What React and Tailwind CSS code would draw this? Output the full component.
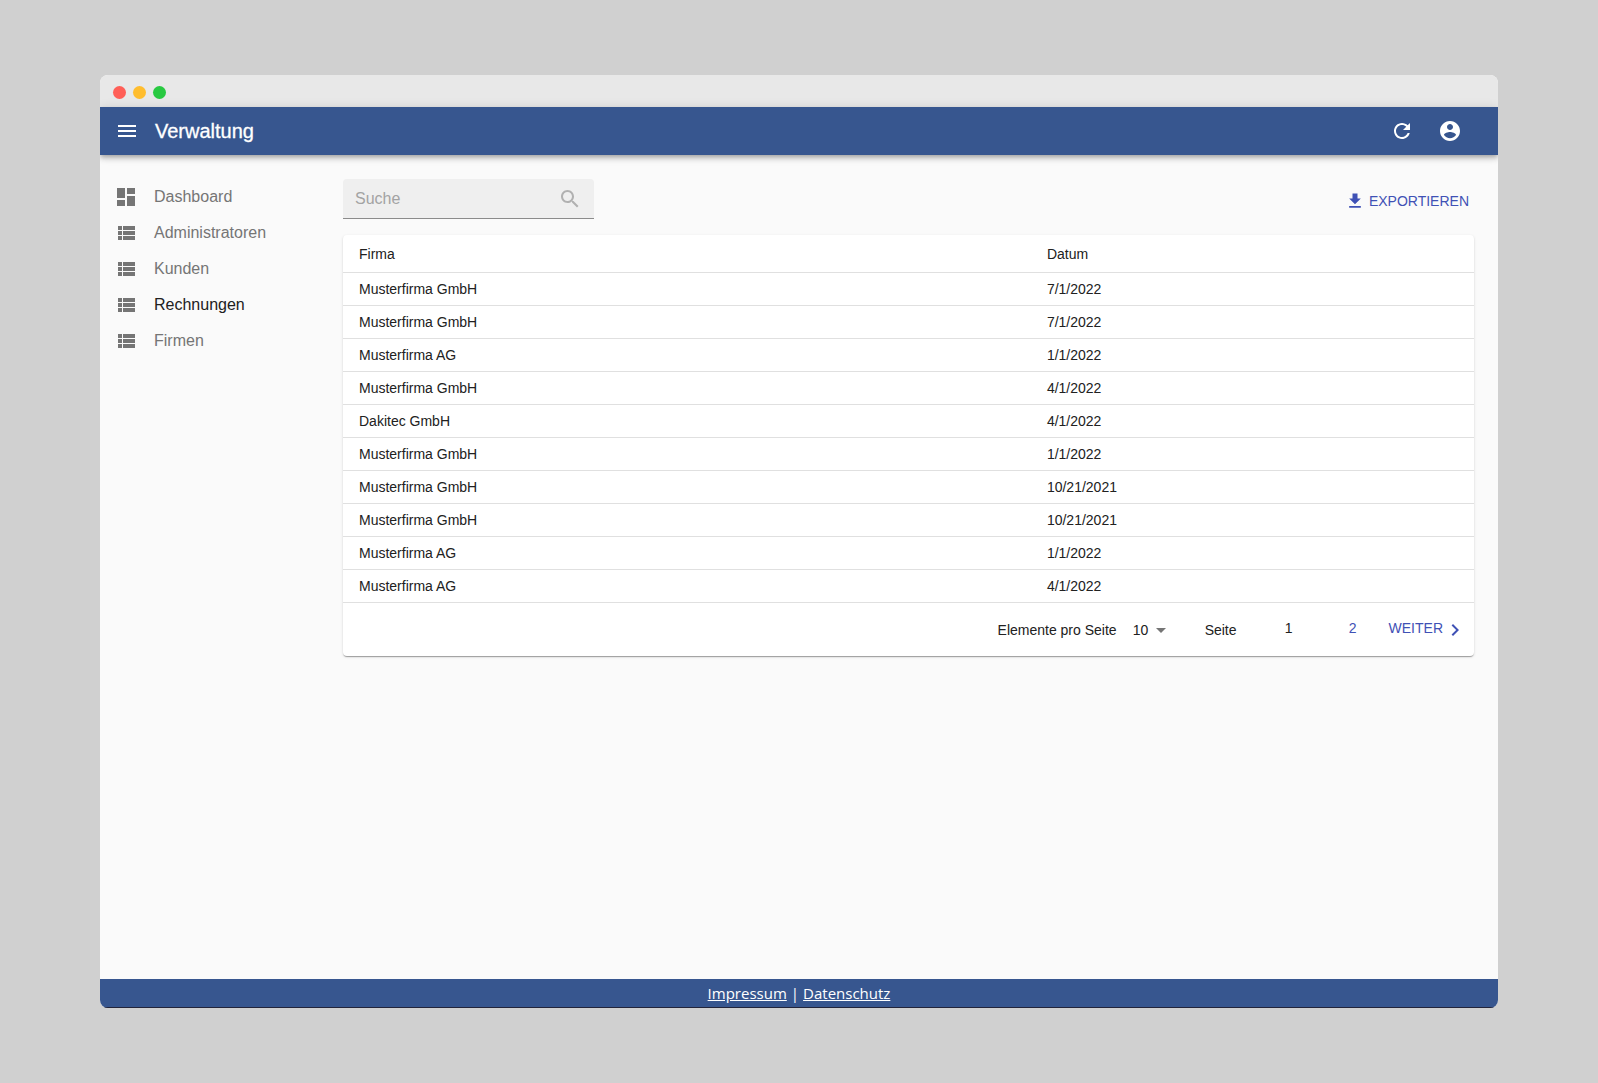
const icons = {
  menu: 'M3 18h18v-2H3v2zm0-5h18v-2H3v2zm0-7v2h18V6H3z',
  refresh:
    'M17.65 6.35C16.2 4.9 14.21 4 12 4c-4.42 0-7.99 3.58-7.99 8s3.57 8 7.99 8c3.73 0 6.84-2.55 7.73-6h-2.08c-.82 2.33-3.04 4-5.65 4-3.31 0-6-2.69-6-6s2.69-6 6-6c1.66 0 3.14.69 4.22 1.78L13 11h7V4l-2.35 2.35z',
  account:
    'M12 2C6.48 2 2 6.48 2 12s4.48 10 10 10 10-4.48 10-10S17.52 2 12 2zm0 3c1.66 0 3 1.34 3 3s-1.34 3-3 3-3-1.34-3-3 1.34-3 3-3zm0 14.2c-2.5 0-4.71-1.28-6-3.22.03-1.99 4-3.08 6-3.08 1.99 0 5.97 1.09 6 3.08-1.29 1.94-3.5 3.22-6 3.22z',
  dashboard: 'M3 13h8V3H3v10zm0 8h8v-6H3v6zm10 0h8V11h-8v10zm0-18v6h8V3h-8z',
  list: 'M4 14h4v-4H4v4zm0 5h4v-4H4v4zM4 9h4V5H4v4zm5 5h12v-4H9v4zm0 5h12v-4H9v4zM9 5v4h12V5H9z',
  search:
    'M15.5 14h-.79l-.28-.27C15.41 12.59 16 11.11 16 9.5 16 5.91 13.09 3 9.5 3S3 5.91 3 9.5 5.91 16 9.5 16c1.61 0 3.09-.59 4.23-1.57l.27.28v.79l5 4.99L20.49 19l-4.99-5zm-6 0C7.01 14 5 11.99 5 9.5S7.01 5 9.5 5 14 7.01 14 9.5 11.99 14 9.5 14z',
  download: 'M19 9h-4V3H9v6H5l7 7 7-7zM5 18v2h14v-2H5z',
  dropdown: 'M7 10l5 5 5-5z',
  chevron: 'M10 6L8.59 7.41 13.17 12l-4.58 4.59L10 18l6-6z',
};

function Icon({ name, className = 'size-6' }) {
  return (
    <svg viewBox="0 0 24 24" fill="currentColor" aria-hidden="true" className={`shrink-0 ${className}`}>
      <path d={icons[name]} />
    </svg>
  );
}

const navItems = [
  { label: 'Dashboard', icon: 'dashboard' },
  { label: 'Administratoren', icon: 'list' },
  { label: 'Kunden', icon: 'list' },
  { label: 'Rechnungen', icon: 'list', active: true },
  { label: 'Firmen', icon: 'list' },
];

const invoices = [
  ['Musterfirma GmbH', '7/1/2022'],
  ['Musterfirma GmbH', '7/1/2022'],
  ['Musterfirma AG', '1/1/2022'],
  ['Musterfirma GmbH', '4/1/2022'],
  ['Dakitec GmbH', '4/1/2022'],
  ['Musterfirma GmbH', '1/1/2022'],
  ['Musterfirma GmbH', '10/21/2021'],
  ['Musterfirma GmbH', '10/21/2021'],
  ['Musterfirma AG', '1/1/2022'],
  ['Musterfirma AG', '4/1/2022'],
];

function TitleBar() {
  return (
    <div className="flex h-8 items-center gap-[7px] bg-[#e8e8e8] px-[13px] pt-0.5">
      <span className="size-[13px] rounded-full bg-[#ff5f57]" />
      <span className="size-[13px] rounded-full bg-[#ffbd2e]" />
      <span className="size-[13px] rounded-full bg-[#28c941]" />
    </div>
  );
}

function AppBar() {
  return (
    <header className="relative flex h-12 items-center bg-[#37568f] pr-9 pl-[15px] text-white shadow-[0_2px_4px_-1px_rgba(0,0,0,0.2),0_4px_5px_0_rgba(0,0,0,0.14),0_1px_10px_0_rgba(0,0,0,0.12)]">
      <button type="button" aria-label="Menü">
        <Icon name="menu" />
      </button>
      <h1 className="ml-4 flex-1 text-xl font-normal [-webkit-text-stroke:0.3px_white]">Verwaltung</h1>
      <div className="flex gap-6">
        <button type="button" aria-label="Aktualisieren">
          <Icon name="refresh" />
        </button>
        <button type="button" aria-label="Profil">
          <Icon name="account" />
        </button>
      </div>
    </header>
  );
}

function Sidebar() {
  return (
    <nav className="w-[243px] shrink-0 pt-6">
      {navItems.map(({ label, icon, active }) => (
        <a
          key={label}
          href="#"
          aria-current={active ? 'page' : undefined}
          className={`flex h-9 items-center gap-4 pl-[14px] text-base ${active ? 'text-[#212121]' : 'text-[#757575]'}`}
        >
          <Icon name={icon} className="size-6 text-[#757575]" />
          <span>{label}</span>
        </a>
      ))}
    </nav>
  );
}

function Toolbar() {
  return (
    <div className="flex items-center justify-between">
      <label className="flex h-10 w-[251px] items-center rounded-t border-b border-[#8b8b8b] bg-[#efefef] px-3">
        <input
          type="text"
          aria-label="Suche"
          placeholder="Suche"
          className="min-w-0 flex-1 bg-transparent text-base outline-none placeholder:text-[#a3a3a3]"
        />
        <Icon name="search" className="size-6 text-[#b1b1b1]" />
      </label>
      <button type="button" className="flex items-center gap-1 pt-1 pr-[5px] text-sm text-[#3f51b5]">
        <Icon name="download" className="size-5" />
        EXPORTIEREN
      </button>
    </div>
  );
}

function Pagination() {
  return (
    <div className="flex h-[53px] items-center justify-end pr-[7px] text-sm text-[#212121]">
      <label htmlFor="page-size">Elemente pro Seite</label>
      <div className="relative ml-4 flex items-center">
        <select id="page-size" defaultValue="10" className="h-6 w-10 appearance-none bg-transparent outline-none">
          <option>10</option>
          <option>25</option>
          <option>50</option>
        </select>
        <Icon name="dropdown" className="pointer-events-none absolute right-0 size-6 text-[#757575]" />
      </div>
      <span className="ml-8">Seite</span>
      <div className="ml-5 flex items-center pr-1 pb-1">
        <button type="button" aria-current="page" className="w-16">1</button>
        <button type="button" className="w-16 text-[#3f51b5]">2</button>
      </div>
      <button type="button" className="flex items-center text-[#3f51b5]">
        <span className="pb-1">WEITER</span>
        <Icon name="chevron" />
      </button>
    </div>
  );
}

function InvoiceTable() {
  return (
    <section className="mt-4 rounded bg-white shadow-[0_2px_1px_-1px_rgba(0,0,0,0.2),0_1px_1px_0_rgba(0,0,0,0.14),0_1px_3px_0_rgba(0,0,0,0.12)]">
      <table className="w-full table-fixed border-separate border-spacing-0 text-left text-sm text-[#212121]">
        <thead>
          <tr className="h-[38px]">
            <th className="w-[61%] border-b border-[#e0e0e0] px-4 font-normal">Firma</th>
            <th className="border-b border-[#e0e0e0] px-[14px] font-normal">Datum</th>
          </tr>
        </thead>
        <tbody>
          {invoices.map(([company, date], i) => (
            <tr key={i} className="h-[33px]">
              <td className="border-b border-[#e0e0e0] px-4">{company}</td>
              <td className="border-b border-[#e0e0e0] px-[14px]">{date}</td>
            </tr>
          ))}
        </tbody>
      </table>
      <Pagination />
    </section>
  );
}

export default function App() {
  return (
    <div className="flex min-h-screen flex-col bg-[#d0d0d0] px-[100px] py-[75px] font-['Liberation_Sans',Arial,sans-serif]">
      <div className="flex flex-1 flex-col overflow-hidden rounded-lg bg-[#fafafa]">
        <TitleBar />
        <AppBar />
        <div className="flex flex-1">
          <Sidebar />
          <main className="min-w-0 flex-1 pt-6 pr-6">
            <Toolbar />
            <InvoiceTable />
          </main>
        </div>
        <footer className="flex h-[29px] items-center justify-center gap-1 border-b border-[#22243a] bg-[#37568f] font-['Open_Sans',sans-serif] text-[15px] text-white">
          <a href="#" className="underline">Impressum</a>
          <span>|</span>
          <a href="#" className="underline">Datenschutz</a>
        </footer>
      </div>
    </div>
  );
}
